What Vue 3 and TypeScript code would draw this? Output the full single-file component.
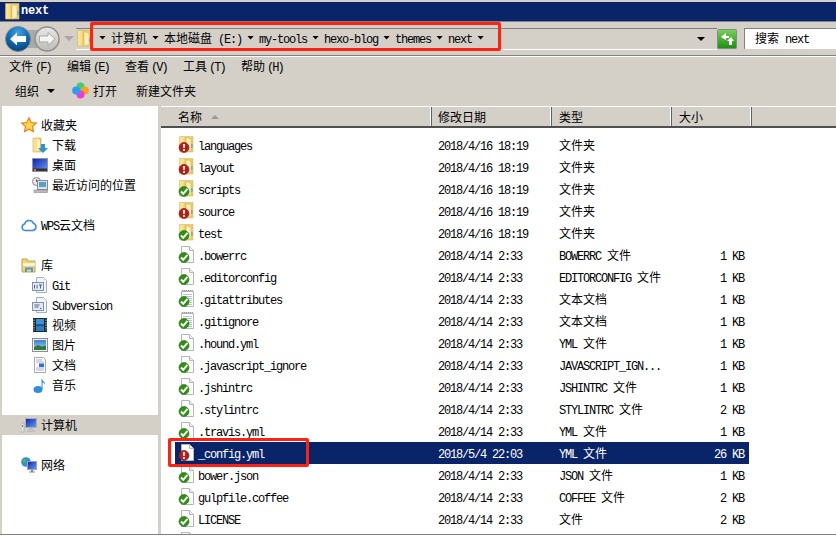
<script setup lang="ts">
import { h } from 'vue'

type Seg = { t: string; c: string }
function segs(text: string): Seg[] {
  const out: Seg[] = []
  for (const m of text.matchAll(/[\u2E80-\u9FFF\uFF00-\uFFEF]+|[^\u2E80-\u9FFF\uFF00-\uFFEF]+/g)) {
    out.push({ t: m[0], c: /^[\u2E80-\u9FFF\uFF00-\uFFEF]/.test(m[0]) ? 'cj' : 'la' })
  }
  return out
}
const Txt = (p: { s: string }) => segs(p.s).map((g) => h('span', { class: g.c }, g.t))
Txt.props = ['s']

const crumbs = ['计算机', '本地磁盘 (E:)', 'my-tools', 'hexo-blog', 'themes', 'next']
const menus = [
  ['文件', '(F)'],
  ['编辑', '(E)'],
  ['查看', '(V)'],
  ['工具', '(T)'],
  ['帮助', '(H)']
]

type Nav = { label?: string; icon?: string; sub?: boolean; selected?: boolean }
const nav: Nav[] = [
  { label: '收藏夹', icon: 'star' },
  { label: '下载', icon: 'dl', sub: true },
  { label: '桌面', icon: 'desk', sub: true },
  { label: '最近访问的位置', icon: 'recent', sub: true },
  {},
  { label: 'WPS云文档', icon: 'cloud' },
  {},
  { label: '库', icon: 'lib' },
  { label: 'Git', icon: 'git', sub: true },
  { label: 'Subversion', icon: 'svn', sub: true },
  { label: '视频', icon: 'video', sub: true },
  { label: '图片', icon: 'pic', sub: true },
  { label: '文档', icon: 'docs', sub: true },
  { label: '音乐', icon: 'music', sub: true },
  {},
  { label: '计算机', icon: 'pc', selected: true },
  {},
  { label: '网络', icon: 'net' }
]

const columns = [
  { label: '名称', w: 271, pad: 17, sort: true },
  { label: '修改日期', w: 120, pad: 6 },
  { label: '类型', w: 120, pad: 7 },
  { label: '大小', w: 80, pad: 7 }
]

const d16 = '2018/4/16 18:19'
const d14 = '2018/4/14 2:33'
type Row = { n: string; d: string; t: string; s: string; i: string; b: string; sel?: boolean }
const rows: Row[] = [
  { n: 'languages', d: d16, t: '文件夹', s: '', i: 'folder', b: 'bad' },
  { n: 'layout', d: d16, t: '文件夹', s: '', i: 'folder', b: 'bad' },
  { n: 'scripts', d: d16, t: '文件夹', s: '', i: 'folder', b: 'ok' },
  { n: 'source', d: d16, t: '文件夹', s: '', i: 'folder', b: 'bad' },
  { n: 'test', d: d16, t: '文件夹', s: '', i: 'folder', b: 'ok' },
  { n: '.bowerrc', d: d14, t: 'BOWERRC 文件', s: '1 KB', i: 'file', b: 'ok' },
  { n: '.editorconfig', d: d14, t: 'EDITORCONFIG 文件', s: '1 KB', i: 'file', b: 'ok' },
  { n: '.gitattributes', d: d14, t: '文本文档', s: '1 KB', i: 'txt', b: 'ok' },
  { n: '.gitignore', d: d14, t: '文本文档', s: '1 KB', i: 'txt', b: 'ok' },
  { n: '.hound.yml', d: d14, t: 'YML 文件', s: '1 KB', i: 'file', b: 'ok' },
  { n: '.javascript_ignore', d: d14, t: 'JAVASCRIPT_IGN...', s: '1 KB', i: 'file', b: 'ok' },
  { n: '.jshintrc', d: d14, t: 'JSHINTRC 文件', s: '1 KB', i: 'file', b: 'ok' },
  { n: '.stylintrc', d: d14, t: 'STYLINTRC 文件', s: '2 KB', i: 'file', b: 'ok' },
  { n: '.travis.yml', d: d14, t: 'YML 文件', s: '1 KB', i: 'file', b: 'ok' },
  { n: '_config.yml', d: '2018/5/4 22:03', t: 'YML 文件', s: '26 KB', i: 'file', b: 'bad', sel: true },
  { n: 'bower.json', d: d14, t: 'JSON 文件', s: '1 KB', i: 'file', b: 'ok' },
  { n: 'gulpfile.coffee', d: d14, t: 'COFFEE 文件', s: '2 KB', i: 'file', b: 'ok' },
  { n: 'LICENSE', d: d14, t: '文件', s: '2 KB', i: 'file', b: 'ok' },
  { n: '', d: '', t: '', s: '', i: 'file', b: 'ok' }
]
</script>

<template>
  <div class="win">
    <svg class="defs" width="0" height="0" aria-hidden="true">
      <defs>
        <linearGradient id="gFolder" x1="0" y1="0" x2="1" y2="0">
          <stop offset="0" stop-color="#fbe79a" /><stop offset="0.6" stop-color="#f7dc85" /><stop offset="1" stop-color="#e3bb56" />
        </linearGradient>
        <radialGradient id="gBack" cx="0.5" cy="0.25" r="0.8">
          <stop offset="0" stop-color="#3fa4e2" /><stop offset="0.5" stop-color="#0f6cb4" /><stop offset="1" stop-color="#053a6e" />
        </radialGradient>
        <linearGradient id="gFwd" x1="0" y1="0" x2="0" y2="1">
          <stop offset="0" stop-color="#e9e8e4" /><stop offset="1" stop-color="#bdbbb5" />
        </linearGradient>
        <linearGradient id="gGreen" x1="0" y1="0" x2="0" y2="1">
          <stop offset="0" stop-color="#7cd05c" /><stop offset="1" stop-color="#1f8d14" />
        </linearGradient>
        <linearGradient id="gScreen" x1="0" y1="0" x2="1" y2="1">
          <stop offset="0" stop-color="#0a1fb0" /><stop offset="1" stop-color="#6f9ef0" />
        </linearGradient>
        <linearGradient id="gSky" x1="0" y1="0" x2="0" y2="1">
          <stop offset="0" stop-color="#3d7ed0" /><stop offset="1" stop-color="#a9d4f2" />
        </linearGradient>
      </defs>
      <symbol id="folder" viewBox="0 0 16 18">
        <path d="M1.500 .5h13.500v15.500H1.500z" fill="#eccb72" stroke="#dcbb63" stroke-width=".6" />
        <path d="M2 1h6v14.500H2z" fill="url(#gFolder)" />
        <path d="M8 1.500l5 1.500v11.500l-5 1.500z" fill="#fff0b8" stroke="#d9b75e" stroke-width=".6" />
        <path d="M13.300 8h1.200v4h-1.200z" fill="#4aa7df" />
      </symbol>
      <symbol id="file" viewBox="0 0 16 18">
        <path d="M3.500 .5h8l4 4v12h-12z" fill="#fff" stroke="#b5b5b5" />
        <path d="M11.500 .5v4h4" fill="#eee" stroke="#b5b5b5" />
      </symbol>
      <symbol id="txt" viewBox="0 0 16 18">
        <path d="M3.500 1.500h12v15h-12z" fill="#fff" stroke="#b5b5b5" />
        <path d="M3.500 1l2-1 2 1 2-1 2 1 2-1 1.500 1" fill="none" stroke="#999" />
        <path d="M5 4.500h9M5 6.500h9M5 8.500h9M5 10.500h9M5 12.500h9M5 14.500h9" stroke="#b9c4d6" />
      </symbol>
      <symbol id="ok" viewBox="0 0 16 18">
        <circle cx="6" cy="11.500" r="5" fill="#2f8f12" stroke="#1f6e0a" stroke-width=".6" />
        <path d="M3 11.500l2.200 2.300L9.500 8.800" fill="none" stroke="#fff" stroke-width="2" />
      </symbol>
      <symbol id="bad" viewBox="0 0 16 18">
        <circle cx="6" cy="11.500" r="5" fill="#b0201a" stroke="#7e1410" stroke-width=".6" />
        <path d="M4.800 8h2.400l-.4 4H5.200zM5 13h2v2H5z" fill="#f6dcd8" />
      </symbol>
      <symbol id="star" viewBox="0 0 16 16">
        <path d="M8 .8l2.200 4.700 5.100.6-3.800 3.500 1 5.100L8 12.200l-4.500 2.500 1-5.100L.7 6.100l5.100-.6z" fill="#fbd34d" stroke="#e8801f" stroke-width="1.200" />
      </symbol>
      <symbol id="dl" viewBox="0 0 16 16">
        <path d="M1 1h8v14H1z" fill="url(#gFolder)" stroke="#cfa955" stroke-width=".6" />
        <path d="M5 2l3 1v10l-3 1z" fill="#fff3c4" />
        <path d="M9 7h4v4h3l-5 5-5-5h3z" fill="#2f8fd8" />
      </symbol>
      <symbol id="desk" viewBox="0 0 16 16">
        <rect x=".5" y="1.500" width="15" height="13" fill="url(#gScreen)" stroke="#8a97a8" />
        <rect x="1" y="11.500" width="14" height="2.500" fill="#333" />
        <rect x="2" y="12" width="2" height="2" fill="#e2702a" />
      </symbol>
      <symbol id="recent" viewBox="0 0 16 16">
        <circle cx="4.500" cy="4.500" r="4" fill="#e8e8e8" stroke="#888" />
        <path d="M4.500 2.500v2h2" fill="none" stroke="#555" />
        <rect x="5.500" y="3.500" width="10" height="9" fill="#dde3e8" stroke="#889" />
        <rect x="7" y="5" width="7" height="5" fill="#5aa0c8" />
        <rect x="2" y="13" width="13.500" height="2.500" fill="#bbb" stroke="#889" stroke-width=".6" />
      </symbol>
      <symbol id="cloud" viewBox="0 0 16 16">
        <path d="M4.200 13.500a3.300 3.300 0 0 1-.6-6.500 4.600 4.600 0 0 1 8.700-.7 3.700 3.700 0 0 1-.5 7.200z" fill="#fff" stroke="#3f86ee" stroke-width="1.500" />
      </symbol>
      <symbol id="lib" viewBox="0 0 16 16">
        <path d="M1 2h5l1 2h7v11H1z" fill="#f1d27a" stroke="#c9a54e" />
        <path d="M2 6h12v3H2z" fill="#fff4cf" />
        <path d="M4 15V10.500h8V15h-2v-2.500H6V15z" fill="#4d9bd6" />
      </symbol>
      <symbol id="git" viewBox="0 0 16 16">
        <path d="M4.500 .5h7l3 3v12h-10z" fill="#f2f6fb" stroke="#9fb1c7" />
        <rect x=".5" y="5.500" width="11" height="8" fill="#dfe8f3" stroke="#7f93ac" />
        <path d="M2.500 8v3.500M5 8v3.500M7 8h3M8.500 8v3.500" stroke="#56677e" />
      </symbol>
      <symbol id="svn" viewBox="0 0 16 16">
        <path d="M4.500 .5h7l3 3v12h-10z" fill="#f2f6fb" stroke="#9fb1c7" />
        <rect x=".5" y="5.500" width="11" height="8" fill="#dfe8f3" stroke="#7f93ac" />
        <path d="M2.500 8h5M2.500 10h4M8 11.500h1.500" stroke="#56677e" />
      </symbol>
      <symbol id="video" viewBox="0 0 16 16">
        <rect x="1" y="1" width="14" height="14" fill="#1d2b2a" />
        <rect x="4" y="2" width="8" height="5.500" fill="#3f8fdc" />
        <rect x="4" y="8.500" width="8" height="5.500" fill="#2f78c8" />
        <path d="M2 2.500v11M14 2.500v11" stroke="#9fd1c8" stroke-dasharray="1.500 1" />
      </symbol>
      <symbol id="pic" viewBox="0 0 16 16">
        <rect x=".5" y="1.500" width="15" height="13" fill="#f2f2f2" stroke="#8d8d8d" />
        <rect x="2" y="3" width="12" height="10" fill="url(#gSky)" />
        <path d="M2 10l4-2 4 1.500 4-1V13H2z" fill="#2f7a3c" />
      </symbol>
      <symbol id="docs" viewBox="0 0 16 16">
        <path d="M2.500 .5h9l2 2v13h-11z" fill="#fbfbfd" stroke="#a7a7b5" />
        <path d="M4 3h6M4 5h8M4 11h8M4 13h8" stroke="#b0b0cc" />
        <rect x="7" y="6.500" width="5" height="3.500" fill="#2f6fd0" />
      </symbol>
      <symbol id="music" viewBox="0 0 16 16">
        <ellipse cx="6" cy="12.500" rx="4.500" ry="3.500" fill="#2f8fdc" />
        <path d="M9.500 12V1c0 2.500 4 3 3.500 7-.6-2-2-2.500-2.500-2.500V12z" fill="#2f8fdc" />
      </symbol>
      <symbol id="pc" viewBox="0 0 16 16">
        <rect x="0" y="6" width="3" height="9" fill="#e6e6e6" stroke="#999" stroke-width=".6" />
        <rect x="1" y="8" width="1" height="2" fill="#3fae3f" />
        <rect x="4.500" y="1.500" width="11" height="9" fill="url(#gScreen)" stroke="#b0b0b0" />
        <path d="M8 11h4v2H8zM6 13.500h8v1.500H6z" fill="#bdbdbd" />
      </symbol>
      <symbol id="net" viewBox="0 0 16 16">
        <circle cx="5" cy="5" r="4.800" fill="#2f8fd8" />
        <path d="M2 2.500c2-1.500 4 0 3 2S1 5.500 2 2.500zM6 6c2 0 2 2 1 3.500S4 8 6 6z" fill="#4fb93f" />
        <rect x="6.500" y="4.500" width="9" height="8" fill="url(#gScreen)" stroke="#9aa3ad" />
        <path d="M10 13h2v1.500h2v1H8v-1h2z" fill="#7f8791" />
      </symbol>
    </svg>

    <div class="titlebar">
      <svg class="title-ico" width="16" height="18" viewBox="0 0 16 18"><use href="#folder" /></svg>
      <span class="title-text">next</span>
    </div>

    <div class="navbar">
      <div class="hist">
        <svg width="26" height="26" viewBox="0 0 26 26">
          <circle cx="13" cy="13" r="12.500" fill="url(#gBack)" stroke="#7d8b97" />
          <path d="M5 13l7-6.500V10h9v6h-9v3.500z" fill="#fff" />
        </svg>
        <svg class="fwd" width="26" height="26" viewBox="0 0 26 26">
          <circle cx="13" cy="13" r="12" fill="url(#gFwd)" stroke="#8f8f8f" stroke-width="1.500" />
          <path d="M21 13l-7-6.500V10H5.500v6H14v3.500z" fill="#f4f4f2" stroke="#a8a8a4" />
        </svg>
      </div>
      <span class="hist-arrow"></span>
      <div class="address">
        <svg class="addr-ico" width="16" height="18" viewBox="0 0 16 18"><use href="#folder" /></svg>
        <div class="crumbs">
          <span class="crumb-arrow"></span>
          <template v-for="c in crumbs" :key="c">
            <span class="crumb"><Txt :s="c" /></span>
            <span class="crumb-arrow"></span>
          </template>
        </div>
        <span class="addr-drop"></span>
      </div>
      <div class="go">
        <svg width="20" height="20" viewBox="0 0 20 20">
          <rect x=".5" y=".5" width="19" height="19" rx="1" fill="url(#gGreen)" stroke="#7f8f7f" />
          <path d="M9 4L4 8l5 3V9h3V7H9zM14 8l-4 4h2v4h3v-4h2z" fill="#fff" />
        </svg>
      </div>
      <div class="search"><Txt s="搜索 next" /></div>
    </div>

    <div class="menubar">
      <span v-for="m in menus" :key="m[0]" class="menu-item">
        <Txt :s="m[0]" /><span class="la menu-key">{{ m[1] }}</span>
      </span>
    </div>

    <div class="toolbar">
      <span class="tool organize"><Txt s="组织" /></span>
      <span class="tool-arrow"></span>
      <svg class="open-ico" width="17" height="17" viewBox="0 0 17 17">
        <circle cx="8.500" cy="4.500" r="4" fill="#3fcf72" />
        <circle cx="12.800" cy="8.500" r="4" fill="#f9a01e" />
        <circle cx="8.500" cy="12.500" r="4" fill="#e83fd0" />
        <circle cx="4.200" cy="8.500" r="4" fill="#2f9bf5" />
      </svg>
      <span class="tool"><Txt s="打开" /></span>
      <span class="tool newdir"><Txt s="新建文件夹" /></span>
    </div>

    <div class="panes">
      <aside class="tree">
        <div
          v-for="(it, i) in nav"
          :key="i"
          class="tree-row"
          :class="{ sub: it.sub, selected: it.selected }"
        >
          <template v-if="it.label">
            <svg width="16" height="16" viewBox="0 0 16 16"><use :href="'#' + it.icon" /></svg>
            <span class="tree-label"><Txt :s="it.label" /></span>
          </template>
        </div>
      </aside>

      <main class="list">
        <div class="head">
          <div
            v-for="c in columns"
            :key="c.label"
            class="head-cell"
            :style="{ width: c.w + 'px', paddingLeft: c.pad + 'px' }"
          >
            <Txt :s="c.label" />
            <span v-if="c.sort" class="sort"></span>
          </div>
        </div>
        <div class="rows">
          <div v-for="(r, i) in rows" :key="i" class="row" :class="{ sel: r.sel }">
            <span class="row-ico">
              <svg width="16" height="18" viewBox="0 0 16 18"><use :href="'#' + r.i" /></svg>
              <svg class="badge" width="16" height="18" viewBox="0 0 16 18"><use :href="'#' + r.b" /></svg>
            </span>
            <span class="cell"><Txt :s="r.n" /></span>
            <span class="cell"><Txt :s="r.d" /></span>
            <span class="cell"><Txt :s="r.t" /></span>
            <span class="cell size"><Txt :s="r.s" /></span>
          </div>
        </div>
      </main>
    </div>
    <div class="bottom"></div>

    <div class="mark mark-address"></div>
    <div class="mark mark-file"></div>
  </div>
</template>

<style scoped>
.win {
  position: relative;
  width: 836px;
  height: 536px;
  overflow: hidden;
  display: flex;
  flex-direction: column;
  background: #d4d0c8;
  color: #000;
}
.defs {
  position: absolute;
}
.titlebar {
  flex: none;
  height: 19px;
  margin-top: 2px;
  background: #0a246a;
  color: #fff;
  display: flex;
  align-items: center;
  padding-left: 4px;
}
.title-ico {
  margin-right: 1px;
}
.title-text {
  font: bold 12px/19px "Liberation Mono", monospace;
  letter-spacing: -0.2px;
}
.navbar {
  flex: none;
  height: 35px;
  display: flex;
  align-items: center;
  padding-left: 5px;
  border-top: 1px solid #808080;
  border-bottom: 1px solid #808080;
  box-shadow: 0 1px 0 #fff;
  box-sizing: border-box;
}
.hist {
  display: flex;
  align-items: center;
  gap: 3px;
  background: linear-gradient(#a9a9a5 0 0) center / 40px 18px no-repeat;
}
.hist svg {
  display: block;
}
.hist-arrow {
  margin-left: 4px;
  width: 0;
  height: 0;
  border-left: 5px solid transparent;
  border-right: 5px solid transparent;
  border-top: 5px solid #a8a8a8;
}
.address {
  margin-left: 2px;
  width: 641px;
  height: 22px;
  box-sizing: border-box;
  border-top: 1px solid #808080;
  border-bottom: 1px solid #fff;
  display: flex;
  align-items: center;
}
.addr-ico {
  flex: none;
}
.crumbs {
  margin-left: 7px;
  margin-bottom: 2px;
  display: flex;
  align-items: center;
  gap: 5px;
}
.crumb {
  white-space: pre;
  line-height: 20px;
}
.crumb-arrow {
  width: 7px;
  height: 4px;
  background: #000;
  clip-path: polygon(0 0, 100% 0, 50% 100%);
}
.addr-drop {
  margin-left: auto;
  margin-right: 12px;
  width: 0;
  height: 0;
  border-left: 4px solid transparent;
  border-right: 4px solid transparent;
  border-top: 4px solid #000;
}
.go {
  display: flex;
}
.search {
  margin-left: 7px;
  flex: 1;
  height: 21px;
  box-sizing: border-box;
  background: #fff;
  border-top: 1px solid #808080;
  border-left: 1px solid #808080;
  padding-left: 10px;
  line-height: 18px;
  white-space: pre;
}
.menubar {
  flex: none;
  height: 21px;
  display: flex;
  align-items: center;
  padding-left: 9px;
}
.menu-item {
  width: 58px;
  white-space: pre;
}
.menu-key {
  margin-left: 2px;
  letter-spacing: -2px;
}
.toolbar {
  flex: none;
  height: 29px;
  display: flex;
  align-items: center;
  padding-left: 15px;
  padding-bottom: 2px;
  box-sizing: border-box;
}
.tool-arrow {
  margin-left: 8px;
  width: 0;
  height: 0;
  border-left: 4px solid transparent;
  border-right: 4px solid transparent;
  border-top: 4px solid #000;
}
.open-ico {
  margin-left: 17px;
  margin-right: 4px;
}
.newdir {
  margin-left: 19px;
}
.panes {
  flex: 1;
  min-height: 0;
  display: flex;
}
.tree {
  flex: none;
  width: 156px;
  margin-left: 2px;
  margin-right: 3px;
  background: #fff;
  padding-top: 9px;
  box-sizing: border-box;
  overflow: hidden;
}
.tree-row {
  height: 20px;
  display: flex;
  align-items: center;
  padding-left: 19px;
}
.tree-row.sub {
  padding-left: 30px;
}
.tree-row.selected {
  background: #d4d0c8;
}
.tree-label {
  margin-left: 4px;
  white-space: pre;
}
.list {
  flex: 1;
  min-width: 0;
  background: #fff;
  display: flex;
  flex-direction: column;
  overflow: hidden;
}
.head {
  flex: none;
  height: 22px;
  display: flex;
  background: #d4d0c8;
  box-sizing: border-box;
  border-top: 1px solid #fff;
  border-bottom: 2px solid #505050;
}
.head-cell {
  box-sizing: border-box;
  display: flex;
  align-items: center;
  border-right: 1px solid #606060;
  box-shadow: inset -1px 0 0 #fff;
  line-height: 19px;
}
.sort {
  margin-left: 9px;
  width: 0;
  height: 0;
  border-left: 4px solid transparent;
  border-right: 4px solid transparent;
  border-bottom: 4px solid #9a9a9a;
}
.rows {
  flex: 1;
  min-height: 0;
  padding: 6px 0 0 14px;
  overflow: hidden;
}
.row {
  width: 574px;
  height: 22px;
  display: grid;
  grid-template-columns: 23px 240px 121px 120px 65px;
  align-items: center;
  white-space: pre;
}
.row.sel {
  background: #0a246a;
  color: #fff;
}
.row-ico {
  position: relative;
  height: 18px;
  margin-left: 3px;
  align-self: start;
  margin-top: 2px;
}
.row-ico svg {
  display: block;
}
.badge {
  position: absolute;
  left: 0;
  top: 0;
}
.size {
  text-align: right;
}
.bottom {
  flex: none;
  height: 2px;
  border-top: 1px solid #808080;
  background: #fff;
  box-sizing: border-box;
}
.mark {
  position: absolute;
  box-sizing: border-box;
  border: 3px solid #ff2112;
  border-radius: 2px;
  pointer-events: none;
}
.mark-address {
  left: 90px;
  top: 22px;
  width: 411px;
  height: 29px;
}
.mark-file {
  left: 168px;
  top: 438px;
  width: 141px;
  height: 29px;
}
</style>

<style>
.cj {
  font: 12px/16px "Noto Sans CJK SC", "Liberation Sans", sans-serif;
}
.la {
  font: 12px/16px "Liberation Mono", "Noto Sans CJK SC", monospace;
  letter-spacing: -1.2px;
  white-space: pre;
}
</style>
